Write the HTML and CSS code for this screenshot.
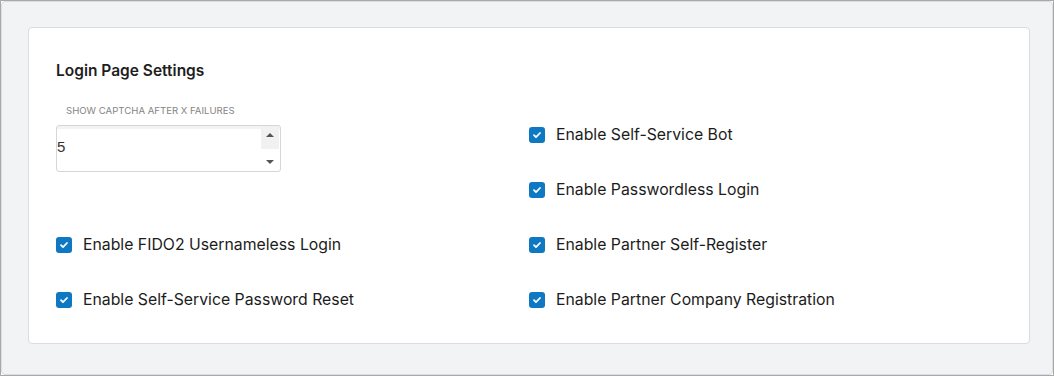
FILE: index.html
```html
<!DOCTYPE html>
<html lang="en">
<head>
    <meta charset="UTF-8">
    <meta name="viewport" content="width=device-width, initial-scale=1.0">
    <title>Login Page Settings</title>
    <link rel="stylesheet" href="styles.css">
</head>
<body>
    <div class="frame">
        <div class="panel">
            <div class="card">
                <h2 class="card-title">Login Page Settings</h2>

                <div class="settings-grid">
                    <!-- Captcha field -->
                    <div class="field">
                        <label class="field-label" for="captcha">Show Captcha After X Failures</label>
                        <div class="number-input">
                            <span class="number-value" id="captcha">5</span>
                            <div class="spinner">
                                <span class="spin spin-up"><span class="arrow-up"></span></span>
                                <span class="spin spin-down"><span class="arrow-down"></span></span>
                            </div>
                        </div>
                    </div>

                    <label class="check-row col-right">
                        <span class="checkbox"><svg viewBox="0 0 16 16"><path d="M5 8.2l2 2 4-4.2" /></svg></span>
                        Enable Self-Service Bot
                    </label>
                    <label class="check-row col-right">
                        <span class="checkbox"><svg viewBox="0 0 16 16"><path d="M5 8.2l2 2 4-4.2" /></svg></span>
                        Enable Passwordless Login
                    </label>
                    <label class="check-row">
                        <span class="checkbox"><svg viewBox="0 0 16 16"><path d="M5 8.2l2 2 4-4.2" /></svg></span>
                        Enable FIDO2 Usernameless Login
                    </label>
                    <label class="check-row">
                        <span class="checkbox"><svg viewBox="0 0 16 16"><path d="M5 8.2l2 2 4-4.2" /></svg></span>
                        Enable Partner Self-Register
                    </label>
                    <label class="check-row">
                        <span class="checkbox"><svg viewBox="0 0 16 16"><path d="M5 8.2l2 2 4-4.2" /></svg></span>
                        Enable Self-Service Password Reset
                    </label>
                    <label class="check-row">
                        <span class="checkbox"><svg viewBox="0 0 16 16"><path d="M5 8.2l2 2 4-4.2" /></svg></span>
                        Enable Partner Company Registration
                    </label>
                </div>
            </div>
        </div>
    </div>
</body>
</html>
```

FILE: styles.css
```css
/* General */
body {
    margin: 0;
    font-family: Inter, "Noto Sans", sans-serif;
    color: #1c1c1c;
    background: #fff;
}

.frame {
    width: 1054px;
    height: 376px;
    box-sizing: border-box;
    border: 1px solid #a9a9a9;
}

.panel {
    height: 100%;
    box-sizing: border-box;
    border: 1px solid #dcdde4;
    border-radius: 4px;
    background-color: #f2f3f5;
    padding: 25px 22px 30px 26px;
}

/* Card */
.card {
    background: #fff;
    border: 1px solid #d9dbe7;
    border-radius: 4px;
    padding: 33px 27px 16px 27px;
}

.card-title {
    margin: 0 0 26px 0;
    font-size: 15.5px;
    line-height: 20px;
    font-weight: 600;
    color: #1e1e1e;
}

/* Grid of settings */
.settings-grid {
    display: grid;
    grid-template-columns: 473px 1fr;
    grid-auto-rows: 55px;
}

.field {
    grid-column: 1;
    grid-row: 1 / span 2;
    margin-top: -3px;
}

.col-right {
    grid-column: 2;
}

.field-label {
    display: block;
    margin: 0 0 7px 10px;
    font-size: 9.6px;
    line-height: 14px;
    text-transform: uppercase;
    color: #858585;
}

.number-input {
    width: 225px;
    height: 47px;
    box-sizing: border-box;
    border: 1px solid #d6d6d6;
    border-radius: 3px;
    box-shadow: inset 0 3px 0 #f3f3f3;
    display: flex;
}

.number-value {
    flex: 1;
    display: flex;
    align-items: center;
    padding-bottom: 4px;
    font-family: "Liberation Sans", Arial, sans-serif;
    font-size: 15px;
    color: #333;
}

.spinner {
    width: 18px;
    display: flex;
    flex-direction: column;
    margin-right: 1px;
}

.spin {
    flex: 1;
    display: flex;
    justify-content: center;
}

.spin-up {
    background: #f1f1f1;
    align-items: flex-start;
    padding-top: 7px;
}

.spin-down {
    align-items: flex-end;
    padding-bottom: 7px;
}

.arrow-up, .arrow-down {
    width: 0;
    height: 0;
    border-left: 4px solid transparent;
    border-right: 4px solid transparent;
}

.arrow-up {
    border-bottom: 4px solid #555;
}

.arrow-down {
    border-top: 4px solid #555;
}

/* Checkbox rows */
.check-row {
    display: flex;
    align-items: center;
    gap: 11px;
    font-size: 15.8px;
    color: #1c1c1c;
}

.checkbox {
    width: 16px;
    height: 16px;
    border-radius: 3px;
    background-color: #0e78c2;
    display: flex;
}

.checkbox svg {
    width: 16px;
    height: 16px;
    fill: none;
    stroke: #fff;
    stroke-width: 1.8;
    stroke-linecap: round;
    stroke-linejoin: round;
}
```
